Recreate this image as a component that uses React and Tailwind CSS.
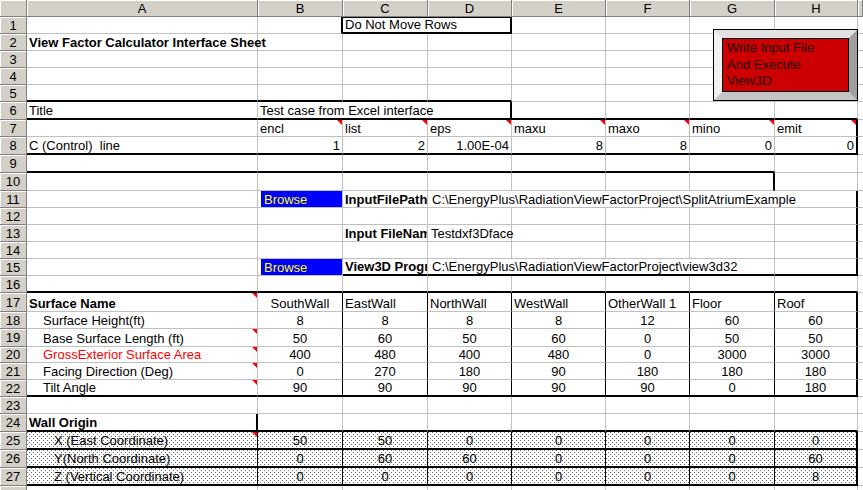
import React from "react";

const GRID = "grid grid-cols-[27px_231px_85px_85px_84px_94px_84px_85px_83px_1fr]";

const RB = { g: "border-r border-r-[#c0c0c0]", k: "border-r border-r-black", K: "border-r-2 border-r-black", n: "" };
const BB = { g: "border-b border-b-[#c0c0c0]", k: "border-b border-b-black", K: "border-b-2 border-b-black", n: "" };
const HEIGHT = { 16: "h-[16px]", 17: "h-[17px]", 18: "h-[18px]", 19: "h-[19px]" };
const SPAN = { 1: "", 2: "col-span-2", 3: "col-span-3", 4: "col-span-4", 5: "col-span-5" };
const DOTS =
  "bg-[image:conic-gradient(from_270deg_at_1px_1px,#666_25%,transparent_0),conic-gradient(from_270deg_at_1px_1px,#666_25%,transparent_0)] bg-[length:4px_4px] bg-[position:0_0,2px_2px]";

// helpers to build sheet rows
const rng = (a, b, p) => Object.fromEntries(Array.from({ length: b - a + 1 }, (_, i) => [a + i, { ...p }]));
const m = (...os) => {
  const out = {};
  os.forEach((o) => Object.entries(o).forEach(([k, v]) => (out[k] = { ...(out[k] || {}), ...v })));
  return out;
};
const nums = (vs, p) => Object.fromEntries(vs.map((v, i) => [i + 1, { t: String(v), ...p }]));

const tableRow = (h, label, vs, extra = {}) => [
  h,
  m(rng(1, 6, { r: "k" }), { 7: { r: "K" } }, { 0: { pl: "pl-[16px]", ...label } }, nums(vs, { a: "c" }), extra),
];

const dotRow = (label, vs, extra = {}) => [
  18,
  m(rng(0, 7, { r: "k", b: "K", dots: true }), { 7: { r: "K" } }, { 0: { pl: "pl-[27px]", ...label } }, nums(vs, { a: "c" }), extra),
];

const rows = [
  [17, { 1: { r: "K" }, 2: { t: "Do Not Move Rows", span: 2, r: "K", b: "K", top: true } }],
  [17, { 0: { t: "View Factor Calculator Interface Sheet", bold: true, ov: true } }],
  [17, {}],
  [17, {}],
  [17, rng(0, 3, { b: "K" })],
  [18, m(rng(4, 7, { b: "K" }), { 0: { t: "Title", b: "K" }, 1: { t: "Test case from Excel interface", span: 3, r: "K", b: "K", ov: true } })],
  [
    17,
    {
      1: { t: "encl", tri: true },
      2: { t: "list", tri: true },
      3: { t: "eps", tri: true },
      4: { t: "maxu", tri: true },
      5: { t: "maxo", tri: true },
      6: { t: "mino", tri: true },
      7: { t: "emit", tri: true, r: "K" },
    },
  ],
  [18, m(rng(0, 7, { b: "K" }), { 0: { t: "C (Control)  line" } }, nums([1, 2, "1.00E-04", 8, 8, 0, 0], { a: "r" }), { 7: { r: "K" } })],
  [18, rng(0, 6, { b: "K" })],
  [18, { 6: { r: "K" } }],
  [
    17,
    {
      1: { browse: true },
      2: { t: "InputFilePath", bold: true },
      3: { t: "C:\\EnergyPlus\\RadiationViewFactorProject\\SplitAtriumExample", span: 5, r: "K", pl: "pl-[4px]" },
    },
  ],
  [17, { 7: { r: "K" } }],
  [17, { 2: { t: "Input FileName", bold: true }, 3: { t: "Testdxf3Dface", pl: "pl-[3px]", ov: true }, 7: { r: "K" } }],
  [17, { 7: { r: "K" } }],
  [
    17,
    m(rng(2, 7, { b: "K" }), {
      1: { browse: true },
      2: { t: "View3D Program", bold: true },
      3: { t: "C:\\EnergyPlus\\RadiationViewFactorProject\\view3d32", span: 4, pl: "pl-[4px]" },
      7: { r: "K" },
    }),
  ],
  [17, rng(0, 7, { b: "K" })],
  tableRow(19, { t: "Surface Name", bold: true, tri: true, pl: "pl-[2px]" }, ["SouthWall", "EastWall", "NorthWall", "WestWall", "OtherWall 1", "Floor", "Roof"], {
    2: { a: "l" },
    3: { a: "l" },
    4: { a: "l" },
    5: { a: "l" },
    6: { a: "l" },
    7: { a: "l" },
  }),
  tableRow(17, { t: "Surface Height(ft)" }, [8, 8, 8, 8, 12, 60, 60]),
  tableRow(18, { t: "Base Surface Length (ft)", tri: true }, [50, 60, 50, 60, 0, 50, 50]),
  tableRow(16, { t: "GrossExterior Surface Area", tri: true, red: true }, [400, 480, 400, 480, 0, 3000, 3000]),
  tableRow(17, { t: "Facing Direction (Deg)", tri: true }, [0, 270, 180, 90, 180, 180, 180]),
  tableRow(17, { t: "Tilt Angle", tri: true }, [90, 90, 90, 90, 90, 0, 180], rng(0, 7, { b: "K" })),
  [17, {}],
  [18, m(rng(0, 7, { b: "K" }), { 0: { t: "Wall Origin", bold: true, r: "K" } })],
  dotRow({ t: "X (East Coordinate)", tri: true }, [50, 50, 0, 0, 0, 0, 0]),
  dotRow({ t: "Y(North Coordinate)" }, [0, 60, 60, 0, 0, 0, 60]),
  dotRow({ t: "Z (Vertical Coordinate)" }, [0, 0, 0, 0, 0, 0, 8]),
  [17, {}],
];

const Cell = ({ c }) => {
  const align =
    c.a === "r" ? "justify-end pr-[2px]" : c.a === "c" ? "justify-center" : c.browse ? "" : c.pl || "pl-[2px]";
  return (
    <div
      className={[
        "relative flex items-end min-w-0 whitespace-pre leading-[15px]",
        SPAN[c.span || 1],
        RB[c.r || "g"],
        BB[c.b || "g"],
        c.top ? "border-t border-t-black" : "",
        c.ov ? "overflow-visible z-10" : "overflow-hidden",
        align,
        c.bold ? "font-bold" : "",
        c.red ? "text-[#ff0000]" : "",
        c.dots ? DOTS : "",
      ].join(" ")}
    >
      {c.browse ? (
        <div className="ml-[3px] flex flex-1 items-end self-stretch bg-[#0000ff] pl-[3px] text-[#ffff00]">Browse</div>
      ) : (
        c.t
      )}
      {c.tri && (
        <span className="absolute right-0 top-0 h-0 w-0 border-l-[5px] border-t-[5px] border-l-transparent border-t-[#ff0000]" />
      )}
    </div>
  );
};

const HeadCell = ({ children, className = "" }) => (
  <div
    className={`flex items-center justify-center bg-[#d4d0c8] border-b border-r border-b-[#808080] border-r-[#808080] shadow-[inset_1px_1px_0_#ffffff] leading-[15px] ${className}`}
  >
    {children}
  </div>
);

export default function App() {
  return (
    <div className="relative h-[490px] w-[863px] overflow-hidden bg-white font-['Liberation_Sans',Arial,sans-serif] text-[13px] text-black">
      <div className={`${GRID} h-[17px]`}>
        <HeadCell />
        {["A", "B", "C", "D", "E", "F", "G", "H", ""].map((l, i) => (
          <HeadCell key={i}>{l}</HeadCell>
        ))}
      </div>

      {rows.map(([h, spec], ri) => {
        const cells = [];
        for (let ci = 0; ci < 9; ci++) {
          const c = ci === 8 ? { r: "n" } : spec[ci] || {};
          cells.push(<Cell key={ci} c={c} />);
          if (c.span) ci += c.span - 1;
        }
        return (
          <div key={ri} className={`${GRID} ${HEIGHT[h]}`}>
            <HeadCell>{ri + 1}</HeadCell>
            {cells}
          </div>
        );
      })}

      {/* macro button shape */}
      <div className="absolute left-[713px] top-[29px] h-[72px] w-[145px] border border-black">
        <div className="h-full w-full border-[8px] border-b-[#c4c4c4] border-l-[#f2f2f2] border-r-[#a0a0a0] border-t-[#e2e2e2]">
          <div className="h-full w-full border border-black bg-[#cc0000] pl-[4px] pt-[1px] leading-[16.5px] text-[#200000]">
            Write Input File
            <br />
            And Execute
            <br />
            View3D
          </div>
        </div>
      </div>
    </div>
  );
}
